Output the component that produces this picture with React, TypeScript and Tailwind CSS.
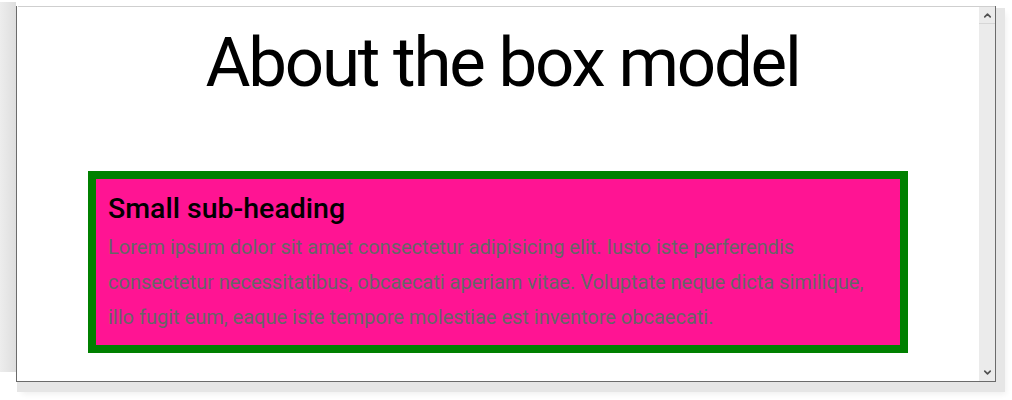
import { ChevronUp, ChevronDown } from "lucide-react";

const lorem =
  "Lorem ipsum dolor sit amet consectetur adipisicing elit. Iusto iste perferendis consectetur necessitatibus, obcaecati aperiam vitae. Voluptate neque dicta similique, illo fugit eum, eaque iste tempore molestiae est inventore obcaecati.";

export default function App() {
  return (
    <div className="w-[1012px] h-[400px] bg-white overflow-hidden flex font-['Roboto',sans-serif]">
      {/* side shadow of the window behind */}
      <div className="w-[16px] mt-[2px] h-[370px] bg-gradient-to-r from-[#ededed] to-[#dedede]" />

      <div className="mt-[6px] flex flex-col">
        {/* browser window */}
        <div className="w-[980px] h-[376px] flex border-l border-r border-b border-[#6b6b6b] shadow-[5px_6px_0_4px_#e6e6e6,8px_10px_6px_2px_#efefef]">
          <div className="flex-1 flex flex-col bg-white">
            <div className="h-px ml-[1px] bg-[#cfcfcf]" />
            <h1 className="pt-[15px] pl-[9px] text-center text-[69px] leading-[82px] text-black font-normal tracking-[-2.2px]">
              About the box model
            </h1>
            <div className="mt-[67px] w-[820px] mx-auto border-[8px] border-[#008000] bg-[#ff1493] pl-[12px] pr-[30px] pt-[12px] pb-[10px]">
              <h2 className="text-[28.5px] leading-[36px] mb-[3px] font-medium text-black">Small sub-heading</h2>
              <p className="text-[20px] leading-[35px] text-[#666666]">{lorem}</p>
            </div>
          </div>

          {/* scrollbar */}
          <div className="w-[16px] flex flex-col bg-[#ebebeb] border-t border-[#cfcfcf]">
            <div className="h-[17px] flex items-center justify-center border-b border-[#d6d6d6]">
              <ChevronUp size={11} strokeWidth={3.5} className="text-[#505050]" />
            </div>
            <div className="flex-1" />
            <div className="h-[17px] flex items-center justify-center">
              <ChevronDown size={11} strokeWidth={3.5} className="text-[#505050]" />
            </div>
          </div>
        </div>
      </div>
    </div>
  );
}
